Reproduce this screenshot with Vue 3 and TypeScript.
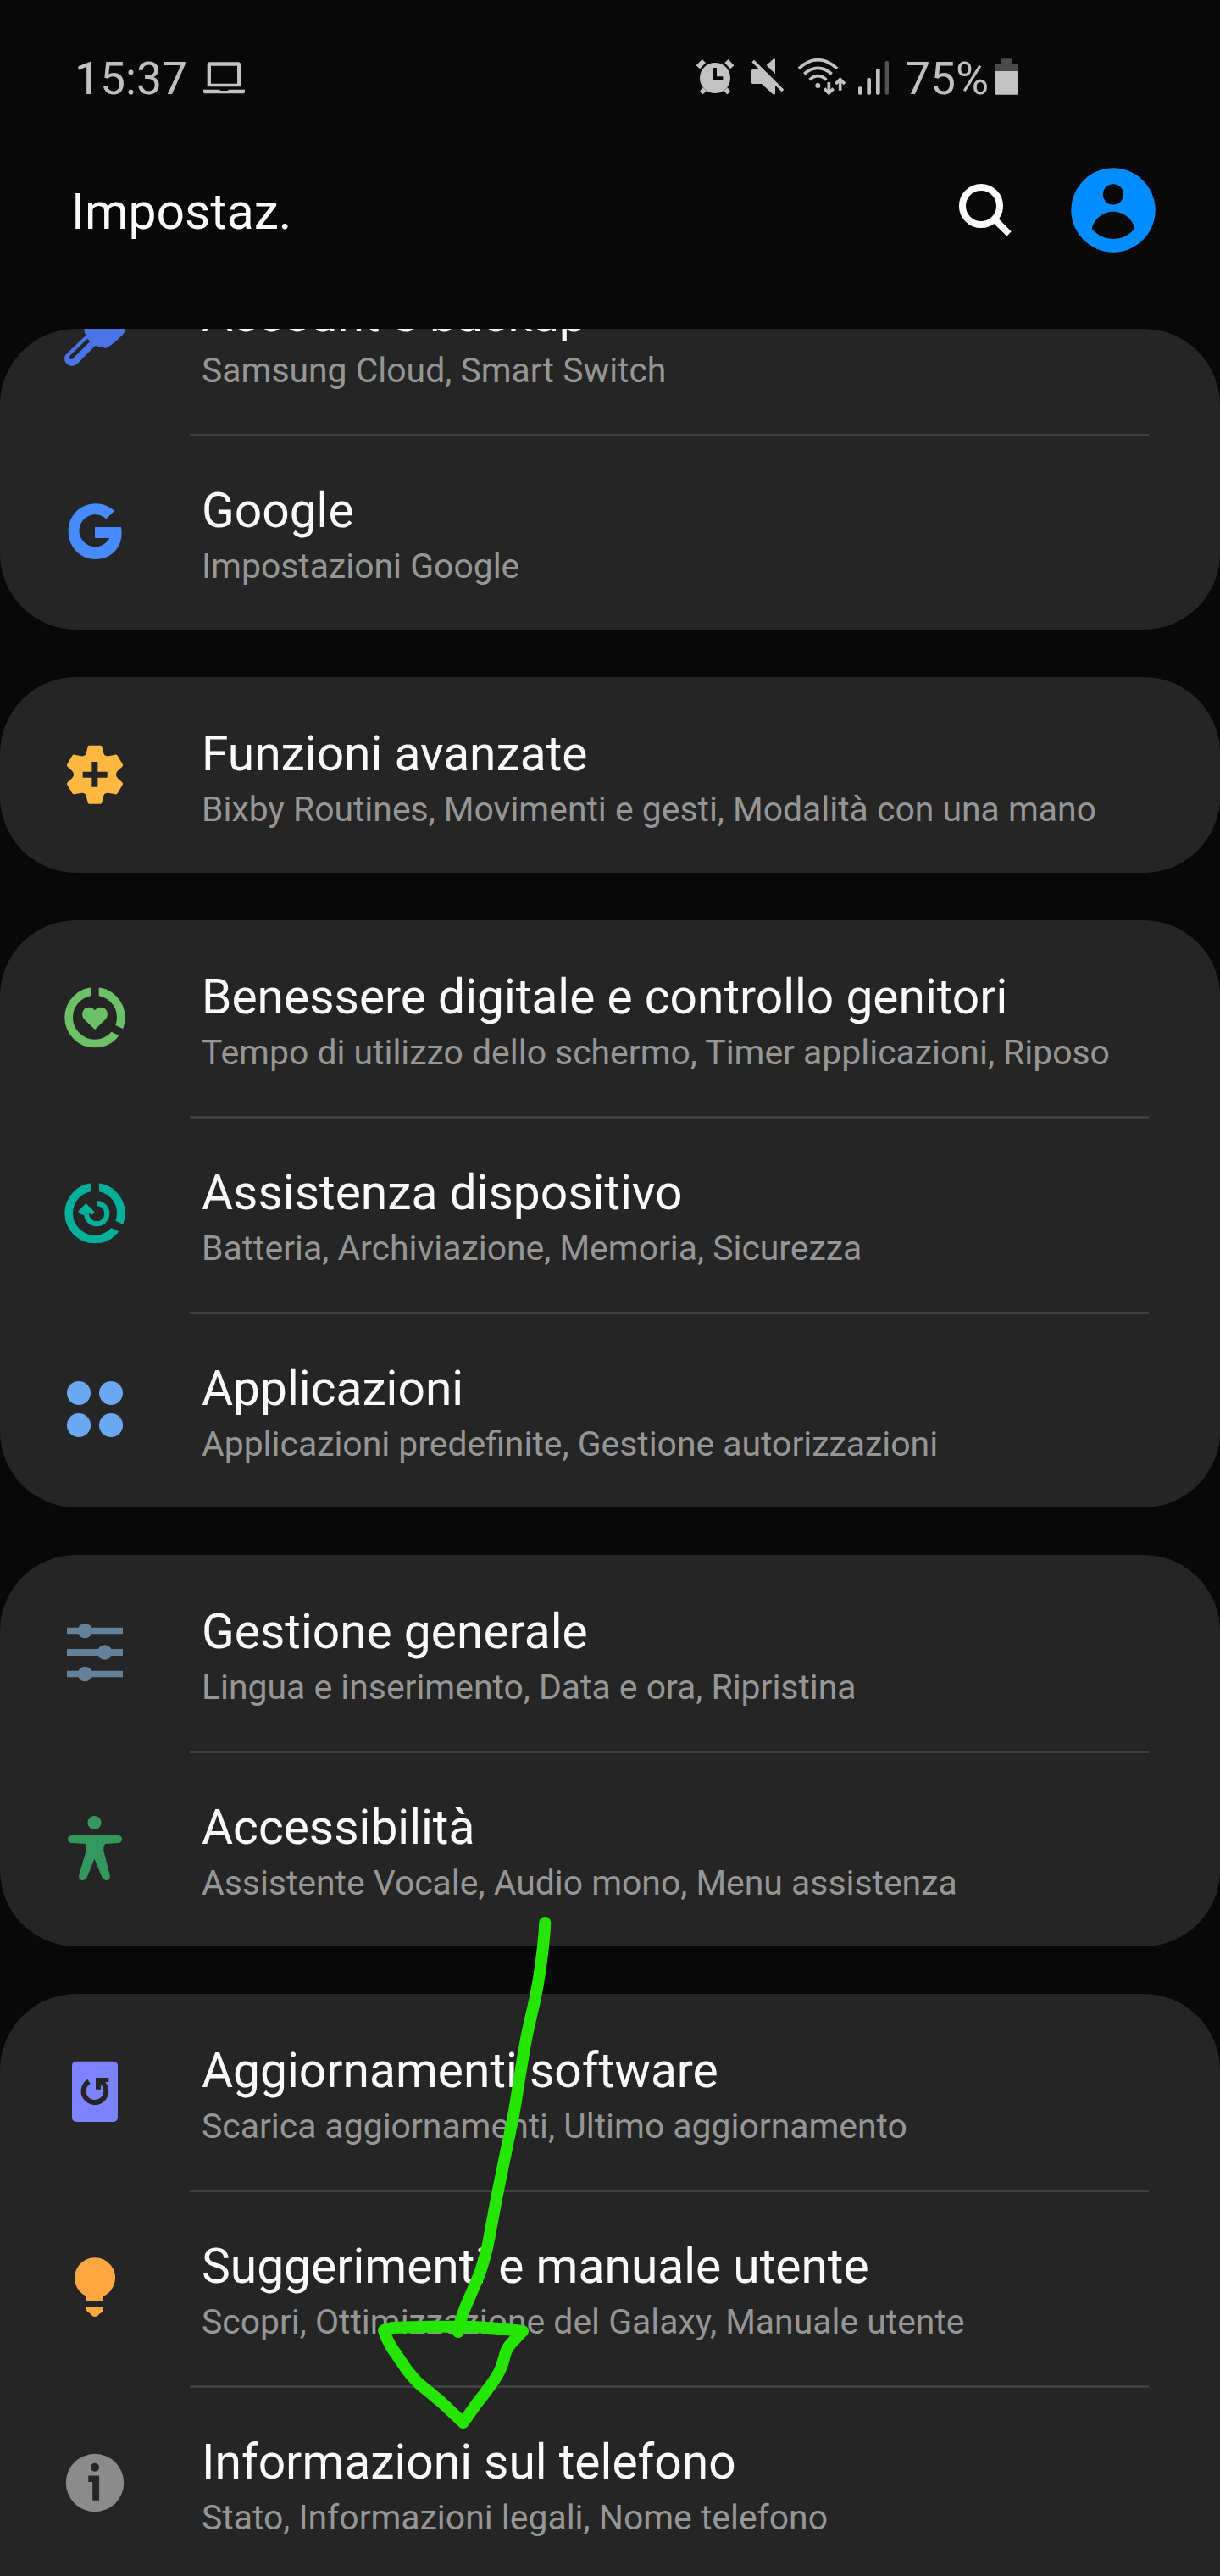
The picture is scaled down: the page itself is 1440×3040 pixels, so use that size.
<script setup lang="ts">
interface Item {
  icon: string
  view: string
  title: string
  summary: string
}

const groups: Item[][] = [
  [
    { icon: 'key', view: '90 -78 252 255', title: 'Account e backup', summary: 'Samsung Cloud, Smart Switch' },
    { icon: 'google', view: '90 615 252 255', title: 'Google', summary: 'Impostazioni Google' },
  ],
  [
    { icon: 'gear', view: '90 66 252 255', title: 'Funzioni avanzate', summary: 'Bixby Routines, Movimenti e gesti, Modalità con una mano' },
  ],
  [
    { icon: 'wellbeing', view: '90 57 252 255', title: 'Benessere digitale e controllo genitori', summary: 'Tempo di utilizzo dello schermo, Timer applicazioni, Riposo' },
    { icon: 'care', view: '90 750 252 255', title: 'Assistenza dispositivo', summary: 'Batteria, Archiviazione, Memoria, Sicurezza' },
    { icon: 'apps', view: '90 63 252 255', title: 'Applicazioni', summary: 'Applicazioni predefinite, Gestione autorizzazioni' },
  ],
  [
    { icon: 'sliders', view: '90 54 252 255', title: 'Gestione generale', summary: 'Lingua e inserimento, Data e ora, Ripristina' },
    { icon: 'person', view: '90 747 252 255', title: 'Accessibilità', summary: 'Assistente Vocale, Audio mono, Menu assistenza' },
  ],
  [
    { icon: 'update', view: '90 78 252 255', title: 'Aggiornamenti software', summary: 'Scarica aggiornamenti, Ultimo aggiornamento' },
    { icon: 'bulb', view: '90 771 252 255', title: 'Suggerimenti e manuale utente', summary: 'Scopri, Ottimizzazione del Galaxy, Manuale utente' },
    { icon: 'info', view: '0 0 84 85', title: 'Informazioni sul telefono', summary: 'Stato, Informazioni legali, Nome telefono' },
  ],
]
</script>

<template>
  <div class="screen">
    <div class="status">
      <span class="clock">15:37</span>
      <svg class="laptop" viewBox="537 51 153 138">
        <path fill-rule="evenodd" d="M562 70H664Q672 70 672 78V157H554V78Q554 70 562 70ZM567 83V146H660V83Z" />
        <path d="M540 167H599V171H628V167H687V175Q687 181 681 181H546Q540 181 540 175Z" />
      </svg>
      <svg class="alarm" viewBox="63 51 138 138">
        <circle cx="132" cy="126" r="54" />
        <path d="M86 60L99 72L78 94L65 82ZM179 60L166 72L186 94L199 82ZM88 160L102 172L89 184L77 175ZM176 160L162 172L175 184L187 175Z" />
        <path class="cut" d="M123 90H138V121H160V135H123Z" />
      </svg>
      <svg class="mute" viewBox="255 51 126 138">
        <path d="M267 96H292L345 150V184H337L297 147H267Q260 147 260 140V103Q260 96 267 96ZM314 81L338 59H345V112Z" />
        <path d="M270 62L376 167L368 175L262 70Z" />
      </svg>
      <svg class="wifi" viewBox="423 51 174 138">
        <g class="line">
          <path d="M429 93Q460 62 496 62T564 93" />
          <path d="M448 112Q470 91 496 91T545 112" />
          <path d="M467 133Q480 119 496 119T526 133" />
          <path d="M535 141V176M575 170V134" />
          <path d="M519 164L535 180L551 164M559 147L575 131L591 147" />
        </g>
        <circle cx="496" cy="153" r="9" />
      </svg>
      <svg class="signal" viewBox="636 51 114 138">
        <rect x="639" y="157" width="13" height="28" rx="5" />
        <rect x="670" y="126" width="14" height="59" rx="5" />
        <rect x="702" y="93" width="14" height="92" rx="5" />
        <rect x="734" y="66" width="13" height="119" rx="5" fill="#545454" />
      </svg>
      <span class="percent">75%</span>
      <svg class="battery" viewBox="1119 51 90 138">
        <path fill="#4a4a4a" d="M1148 58H1181Q1183 58 1183 60V75H1200Q1206 75 1206 81V104H1122V81Q1122 75 1128 75H1146V60Q1146 58 1148 58Z" />
        <path d="M1122 102H1206V180Q1206 185 1200 185H1128Q1122 185 1122 180Z" />
      </svg>
    </div>

    <header class="header">
      <h1>Impostaz.</h1>
      <svg class="search" viewBox="93 108 192 192">
        <circle cx="174" cy="189" r="66" fill="none" stroke="#fafafa" stroke-width="24" />
        <path fill="#fafafa" d="M218 250L236 234L281 280L265 296Z" />
      </svg>
      <svg class="avatar" viewBox="492 54 300 300">
        <circle cx="642" cy="204" r="149" fill="#018dff" />
        <circle cx="642" cy="148" r="36.500" fill="#080808" />
        <path fill="#080808" d="M567 268C574 235 606 209 642 209S710 235 718 268Q718 271 715 273C695 295 669 306 642 306S589 295 569 273Q566 271 567 268Z" />
      </svg>
    </header>

    <main class="viewport">
      <div class="list">
        <section v-for="(group, g) in groups" :key="g" class="card">
          <div v-for="item in group" :key="item.title" class="row">
            <svg class="icon" :viewBox="item.view">
              <g v-if="item.icon === 'key'" fill="#4a74e6">
                <path d="M176 -10L324 -10V30Q322 37 314 46Q285 77 255 93L217 84L154 148Q146 156 135 156Q108 154 108 127Q109 119 115 113L184 47Q178 38 178 24Z" />
                <path d="M194 64L132 125" fill="none" stroke="#252525" stroke-width="14" />
                <circle cx="132" cy="125" r="7" fill="#252525" />
              </g>
              <path v-else-if="item.icon === 'google'" fill="#468cff" d="M285 669L256 697A57 57 0 1 0 268 765H216V726H309C320 790 280 840 218 840C164 840 122 796 122 741S164 643 218 643C243 643 268 653 285 669Z" />
              <g v-else-if="item.icon === 'gear'">
                <path fill="#ffb841" d="M196 89H236Q240 89 241 93L247 118Q249 124 256 126Q262 128 268 126L288 122Q293 121 296 125L314 155Q317 160 313 164L296 180Q291 185 291 192T296 204L313 220Q317 224 314 229L296 259Q293 263 288 262L268 258Q262 256 256 258Q249 260 247 266L241 292Q240 296 236 296H196Q192 296 191 292L185 266Q183 260 176 258Q170 256 164 258L144 262Q139 263 136 259L118 229Q115 224 119 220L136 204Q141 199 141 192T136 180L119 164Q115 160 118 155L136 125Q139 121 144 122L164 126Q170 128 176 126Q183 124 185 118L191 93Q192 89 196 89Z" />
                <path fill="#252525" d="M205 147H226V182H260V203H226V236H205V203H173V182H205Z" />
              </g>
              <g v-else-if="item.icon === 'wellbeing'">
                <circle cx="216" cy="182" r="92.500" fill="none" stroke="#6cc067" stroke-width="29" />
                <path d="M216.500 60V122M265 214L330 244" stroke="#252525" stroke-width="27" />
                <path fill="#6cc067" d="M216 225L179 190C166 176 170 147 194 146C204 146 212 151 216 157C220 151 228 146 238 146C262 147 267 176 253 190Z" />
              </g>
              <g v-else-if="item.icon === 'care'">
                <circle cx="216" cy="875" r="92.500" fill="none" stroke="#00b09b" stroke-width="29" />
                <path d="M216 753V815M265 907L330 937" stroke="#252525" stroke-width="29" />
                <path d="M222 840A36.500 36.500 0 1 1 186 877" fill="none" stroke="#00b09b" stroke-width="18" />
                <path fill="#00b09b" d="M184 840L215 870L205 882L195 874L176 882L168 879L156 869Z" />
              </g>
              <g v-else-if="item.icon === 'apps'" fill="#6aa8f1">
                <circle cx="159" cy="132" r="42" />
                <circle cx="273" cy="132" r="42" />
                <circle cx="159" cy="246" r="42" />
                <circle cx="273" cy="246" r="42" />
              </g>
              <g v-else-if="item.icon === 'sliders'" fill="#638299">
                <path d="M117 92H315V115H117ZM117 168H315V192H117ZM117 245H315V268H117Z" />
                <circle cx="181" cy="103.500" r="26" />
                <circle cx="251" cy="180" r="26" />
                <circle cx="181" cy="256.500" r="26" />
              </g>
              <g v-else-if="item.icon === 'person'" fill="#33985d">
                <circle cx="214.500" cy="783" r="24" />
                <path d="M134 828H298Q312 829 312 841Q312 854 299 855L253 858Q245 868 247 882L269 968Q272 982 260 987Q248 989 242 979L214.500 911L187 979Q181 989 169 987Q157 982 160 968L185 882Q186 868 182 858L133 855Q120 854 120 841Q120 829 134 828Z" />
              </g>
              <g v-else-if="item.icon === 'update'">
                <rect x="135" y="98" width="162" height="214" rx="15" fill="#7c83ff" />
                <path d="M195 169A40 40 0 1 0 242 173" fill="none" stroke="#252525" stroke-width="18" />
                <path fill="#252525" d="M219 156H265V171H249L237 182V197H219Z" />
              </g>
              <g v-else-if="item.icon === 'bulb'" fill="#ffa743">
                <path d="M186 948V930A72 72 0 1 1 246 930V948Z" />
                <path d="M186 966H246V979Q245 987 233 991Q226 1002 216 1002T199 991Q187 985 186 979Z" />
              </g>
              <g v-else>
                <circle cx="42" cy="42" r="34.200" fill="#8b8b8b" />
                <circle cx="42" cy="23.800" r="5" fill="#252525" />
                <path fill="#252525" d="M34.300 33.400H47.100V62.700H39.200V41H34.300Z" />
              </g>
            </svg>
            <div class="text">
              <div class="title">{{ item.title }}</div>
              <div class="summary">{{ item.summary }}</div>
            </div>
          </div>
        </section>
      </div>
    </main>

    <svg class="arrow" viewBox="440 2250 200 630">
      <path d="M643.300 2269C642.500 2290 637 2332 633.300 2350C630 2368 625 2386 621.700 2403S616 2436 613.300 2452S610 2475 606.700 2493S600 2525 596.700 2542L586.700 2591L578.300 2636Q575 2655 572 2664Q568 2680 562 2693L550 2721Q543 2738 540.700 2752" />
      <path d="M453 2750L463 2747Q510 2745 560 2746L583 2747.500L617 2751L602 2767Q597 2773 595 2783Q592 2795 587 2803Q580 2815 563 2836L546.700 2859L520 2834L495 2813.500Q484 2803 475 2789L462 2770Q456 2760 453 2750Z" />
    </svg>
  </div>
</template>

<style>
body {
  background: #080808;
}
</style>

<style scoped>
.screen {
  position: relative;
  width: 1440px;
  height: 3040px;
  overflow: hidden;
  display: flex;
  flex-direction: column;
  background: #080808;
  font-family: Roboto, "Noto Sans", sans-serif;
}

.status {
  height: 113px;
  padding: 67px 0 0 88px;
  box-sizing: border-box;
  display: flex;
  align-items: flex-start;
  color: #c0c0c0;
  font-size: 53.4px;
  line-height: 52px;
  white-space: nowrap;
}

.status svg {
  height: 46px;
  flex: none;
  fill: #c2c2c2;
}

.status .cut {
  fill: #080808;
}

.clock {
  flex: none;
  width: 151px;
}

.laptop {
  width: 51px;
  margin-right: 531px;
}

.alarm {
  width: 46px;
  margin-right: 18px;
}

.mute {
  width: 42px;
  margin-right: 14px;
}

.wifi {
  width: 58px;
  margin-right: 13px;
}

.wifi .line {
  fill: none;
  stroke: #c2c2c2;
  stroke-width: 11;
}

.signal {
  width: 38px;
  margin-right: 18px;
}

.percent {
  flex: none;
  width: 105px;
}

.battery {
  width: 30px;
}

.header {
  height: 275px;
  flex: none;
  display: flex;
  align-items: flex-start;
}

h1 {
  margin: 102px 0 0 84px;
  width: 1047px;
  font-size: 58.8px;
  line-height: 70px;
  font-weight: 400;
  color: #fafafa;
}

.search {
  width: 64px;
  height: 64px;
  margin: 103px 69px 0 0;
}

.avatar {
  width: 100px;
  height: 100px;
  margin-top: 85px;
}

.viewport {
  flex: 1;
  min-height: 0;
  overflow: hidden;
  border-radius: 90px 90px 0 0;
  background: #252525;
}

.list {
  margin-top: -107px;
  display: flex;
  flex-direction: column;
  gap: 56px;
  background: #080808;
}

.card {
  border-radius: 90px;
  background: #252525;
}

.card:first-child {
  border-radius: 0 0 90px 90px;
}

.card:last-child {
  border-radius: 90px 90px 0 0;
}

.row {
  height: 231px;
  box-sizing: border-box;
  display: flex;
  align-items: flex-start;
  padding-left: 70px;
  background: linear-gradient(#404040, #404040) 224px 0 / 1132px 0 no-repeat;
}

.row + .row {
  background-size: 1132px 3px;
}

.icon {
  flex: none;
  width: 84px;
  height: 85px;
  margin: 73px 84px 0 0;
}

.text {
  padding-top: 57px;
  white-space: nowrap;
}

.title {
  font-size: 56.9px;
  line-height: 68px;
  color: #fafafa;
}

.summary {
  margin-top: 7px;
  font-size: 40.9px;
  line-height: 48px;
  color: #969696;
}

.arrow {
  position: absolute;
  left: 440px;
  top: 2250px;
  width: 200px;
  height: 630px;
  overflow: visible;
  fill: none;
  stroke: #24e600;
  stroke-width: 14;
  stroke-linecap: round;
  stroke-linejoin: round;
}
</style>
